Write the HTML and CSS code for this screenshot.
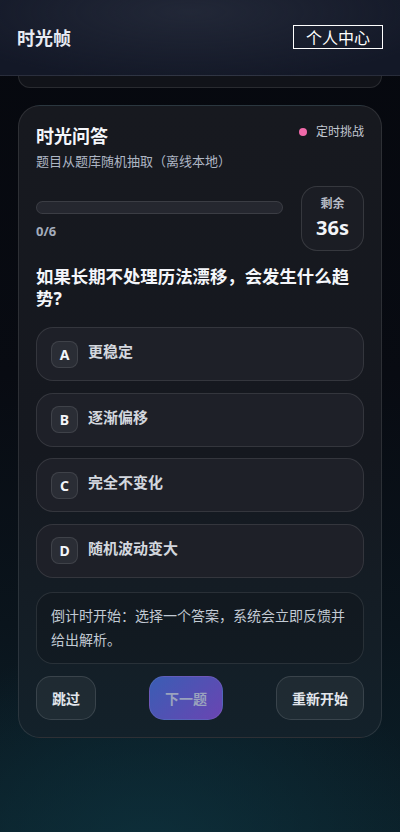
FILE: index.html
```html
<!DOCTYPE html>
<html lang="zh-CN">
<head>
<meta charset="utf-8">
<meta name="viewport" content="width=device-width, initial-scale=1">
<title>时光帧</title>
<link rel="stylesheet" href="styles.css">
</head>
<body>
<header class="topbar">
  <div class="brand">时光帧</div>
  <button class="profile-btn">个人中心</button>
</header>
<main class="content">
  <div class="prev-card"></div>
  <section class="card">
    <div class="card-head">
      <h1 class="card-title">时光问答</h1>
      <div class="tag"><span class="dot"></span>定时挑战</div>
    </div>
    <p class="subtitle">题目从题库随机抽取（离线本地）</p>
    <div class="progress-row">
      <div class="progress-col">
        <div class="bar"><div class="bar-fill" style="width:0%"></div></div>
        <div class="count">0/6</div>
      </div>
      <div class="timer">
        <div class="timer-label">剩余</div>
        <div class="timer-value">36s</div>
      </div>
    </div>
    <h2 class="question">如果长期不处理历法漂移，会发生什么趋势?</h2>
    <ul class="options">
      <li class="option"><span class="badge">A</span><span class="opt-text">更稳定</span></li>
      <li class="option"><span class="badge">B</span><span class="opt-text">逐渐偏移</span></li>
      <li class="option"><span class="badge">C</span><span class="opt-text">完全不变化</span></li>
      <li class="option"><span class="badge">D</span><span class="opt-text">随机波动变大</span></li>
    </ul>
    <div class="info">倒计时开始：选择一个答案，系统会立即反馈并给出解析。</div>
    <div class="actions">
      <button class="btn">跳过</button>
      <button class="btn btn-primary">下一题</button>
      <button class="btn">重新开始</button>
    </div>
  </section>
</main>
</body>
</html>
```
FILE: styles.css
```css
* { box-sizing: border-box; }
html, body { margin: 0; padding: 0; }
body {
  width: 400px;
  min-height: 832px;
  font-family: "Noto Sans", "Noto Sans CJK SC", sans-serif;
  color: #eef1f6;
  background:
    radial-gradient(ellipse 300px 220px at 150px 860px, rgba(14, 52, 64, 0.75), rgba(14, 52, 64, 0) 100%),
    linear-gradient(180deg, #06080e 0%, #080b12 45%, #0a141c 75%, #0b2029 100%);
}
.topbar {
  height: 76px;
  display: flex;
  align-items: center;
  justify-content: space-between;
  padding: 0 17px;
  border-bottom: 1px solid rgba(255, 255, 255, 0.08);
  background:
    radial-gradient(ellipse 260px 70px at 190px 12px, rgba(40, 46, 62, 0.7), rgba(40, 46, 62, 0) 100%),
    #131827;
}
.brand {
  font-size: 18px;
  font-weight: 700;
  color: #e6eaf2;
  margin-top: -2px;
}
.profile-btn {
  font-family: "Noto Sans CJK SC", sans-serif;
  font-size: 16px;
  color: #ffffff;
  background: transparent;
  border: 1px solid #ffffff;
  border-radius: 0;
  height: 24px;
  width: 90px;
  padding: 0;
  line-height: 20px;
  margin-top: -2px;
}
.content {
  padding: 0 18px 40px;
}
.prev-card {
  height: 12px;
  border: 1px solid rgba(255, 255, 255, 0.1);
  border-top: none;
  border-radius: 0 0 20px 20px;
  background: #111319;
}
.card {
  margin-top: 17px;
  border: 1px solid rgba(255, 255, 255, 0.1);
  border-radius: 22px;
  padding: 17px 17px 17px;
  background: linear-gradient(180deg, #17191f 0%, #15181f 55%, #13212a 100%);
}
.card-head {
  display: flex;
  justify-content: space-between;
  align-items: flex-start;
}
.card-title {
  margin: 0;
  font-size: 18px;
  line-height: 26px;
  font-weight: 700;
  color: #f4f6fa;
}
.tag {
  display: flex;
  align-items: center;
  gap: 9px;
  font-size: 12px;
  line-height: 18px;
  color: #c3c8d2;
}
.dot {
  width: 8px;
  height: 8px;
  border-radius: 50%;
  background: #f06aa9;
}
.subtitle {
  margin: 2px 0 0;
  font-size: 13px;
  line-height: 20px;
  color: #aeb6c4;
}
.progress-row {
  margin-top: 15px;
  display: flex;
  align-items: center;
  gap: 18px;
}
.progress-col {
  flex: 1;
  padding-top: 4px;
}
.bar {
  height: 13px;
  border-radius: 7px;
  background: #25272f;
  border: 1px solid rgba(255, 255, 255, 0.1);
  overflow: hidden;
}
.bar-fill {
  height: 100%;
  background: linear-gradient(90deg, #3a5bb5, #6b44b3);
}
.count {
  margin-top: 7px;
  font-size: 13px;
  font-weight: 700;
  line-height: 20px;
  color: #a3acbb;
}
.timer {
  width: 63px;
  height: 65px;
  border: 1px solid rgba(255, 255, 255, 0.12);
  border-radius: 16px;
  background: #1b1d24;
  display: flex;
  flex-direction: column;
  align-items: center;
  justify-content: center;
}
.timer-label {
  font-size: 12px;
  line-height: 16px;
  color: #b7bcc6;
  font-weight: 700;
}
.timer-value {
  font-size: 20px;
  line-height: 26px;
  font-weight: 700;
  color: #f2f4f8;
  margin-top: 3px;
}
.question {
  margin: 14px 0 0;
  font-size: 17.4px;
  line-height: 22px;
  font-weight: 700;
  color: #f4f6fa;
}
.options {
  list-style: none;
  margin: 18px 0 0;
  padding: 0;
  display: flex;
  flex-direction: column;
  gap: 11.5px;
}
.option {
  height: 54px;
  display: flex;
  align-items: center;
  gap: 10px;
  padding: 0 14px;
  border: 1px solid rgba(255, 255, 255, 0.1);
  border-radius: 17px;
  background: #1e2028;
}
.badge {
  width: 27px;
  height: 27px;
  border-radius: 8px;
  background: #2a2d35;
  border: 1px solid rgba(255, 255, 255, 0.1);
  display: flex;
  align-items: center;
  justify-content: center;
  font-size: 14px;
  font-weight: 700;
  color: #f4f6fa;
}
.opt-text {
  font-size: 15px;
  font-weight: 700;
  color: #d3d7de;
  margin-bottom: 7px;
}
.info {
  margin-top: 14px;
  padding: 11px 14px;
  border: 1px solid rgba(255, 255, 255, 0.1);
  border-radius: 17px;
  font-size: 14px;
  line-height: 24px;
  color: #c2cad4;
  background: rgba(10, 14, 20, 0.25);
}
.actions {
  margin-top: 12px;
  display: flex;
  justify-content: space-between;
}
.btn {
  height: 44px;
  padding: 0 15px;
  border-radius: 15px;
  border: 1px solid rgba(255, 255, 255, 0.12);
  background: rgba(255, 255, 255, 0.05);
  font-family: "Noto Sans CJK SC", sans-serif;
  font-size: 14px;
  font-weight: 700;
  color: #e2e6ec;
}
.btn-primary {
  background: linear-gradient(135deg, #3a5db4 0%, #6a45b2 100%);
  color: #9aa3bd;
  border-color: rgba(255, 255, 255, 0.08);
}
```
